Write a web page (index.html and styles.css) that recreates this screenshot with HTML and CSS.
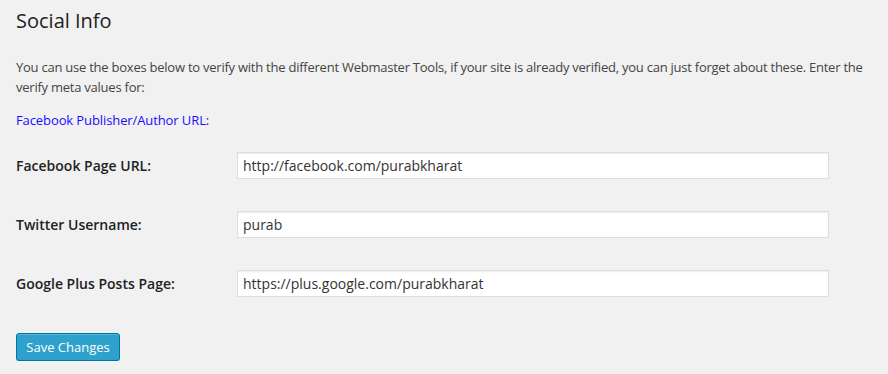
FILE: index.html
```html
<!DOCTYPE html>
<html>
<head>
<meta charset="utf-8">
<link rel="stylesheet" href="styles.css">
</head>
<body>
<div class="wrap">
  <h2 class="title">Social Info</h2>
  <p class="intro">You can use the boxes below to verify with the different Webmaster Tools, if your site is already verified, you can just forget about these. Enter the verify meta values for:</p>
  <p class="linkline"><a href="#" class="link">Facebook Publisher/Author URL:</a></p>
  <div class="form-table">
    <div class="row">
      <label class="label">Facebook Page URL:</label>
      <input class="field" type="text" value="http://facebook.com/purabkharat">
    </div>
    <div class="row">
      <label class="label">Twitter Username:</label>
      <input class="field" type="text" value="purab">
    </div>
    <div class="row">
      <label class="label">Google Plus Posts Page:</label>
      <input class="field" type="text" value="https://plus.google.com/purabkharat">
    </div>
  </div>
  <div class="submit">
    <button class="button-primary" type="button">Save Changes</button>
  </div>
</div>
</body>
</html>
```

FILE: styles.css
```css
html, body {
  margin: 0;
  padding: 0;
  background: #f1f1f1;
  overflow: hidden;
}
body {
  font-family: "Open Sans", "Liberation Sans", sans-serif;
  font-size: 13px;
  color: #444;
  line-height: 1.4;
}
.wrap {
  padding: 0 4px 0 16px;
}
.title {
  margin: 0;
  padding: 6px 0 0;
  font-size: 20px;
  font-weight: 400;
  line-height: 29px;
  color: #222;
}
.intro {
  margin: 22px 0 0;
  line-height: 20px;
  letter-spacing: -0.24px;
}
.linkline {
  margin: 13px 0 0;
  line-height: 20px;
  letter-spacing: -0.1px;
}
.link {
  color: #1a0dff;
  text-decoration: none;
}
.form-table {
  margin-top: 6px;
  display: flex;
  flex-direction: column;
}
.row {
  display: grid;
  grid-template-columns: 221px 592px;
  align-items: center;
  height: 59px;
}
.label {
  font-weight: 600;
  color: #222;
  font-size: 14px;
}
.field {
  box-sizing: border-box;
  width: 592px;
  height: 27px;
  margin: 0;
  padding: 3px 5px;
  border: 1px solid #ddd;
  background: #fff;
  box-shadow: inset 0 1px 2px rgba(0,0,0,.07);
  font-family: "Open Sans", "Liberation Sans", sans-serif;
  font-size: 14px;
  color: #333;
  outline: none;
}
.submit {
  margin-top: 20px;
}
.button-primary {
  box-sizing: border-box;
  width: 104px;
  height: 28px;
  padding: 0;
  white-space: nowrap;
  border: 1px solid #0074a2;
  border-radius: 3px;
  background: #2ea2cc;
  box-shadow: inset 0 1px 0 rgba(120,200,230,.5), 0 1px 0 rgba(0,0,0,.15);
  color: #fff;
  font-family: "Open Sans", "Liberation Sans", sans-serif;
  font-size: 13px;
  line-height: 26px;
}
```
